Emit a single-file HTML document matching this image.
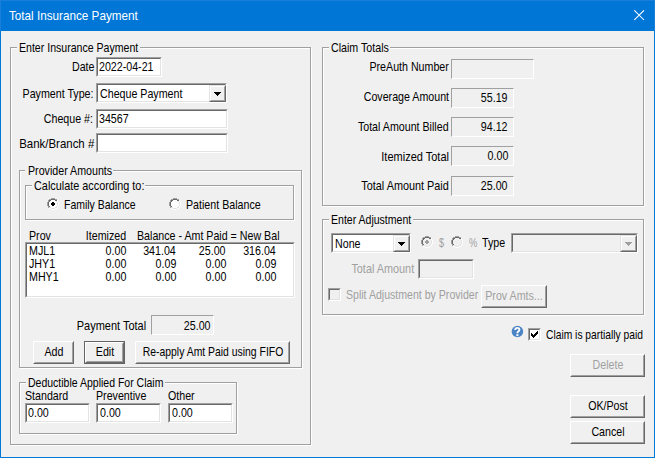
<!DOCTYPE html><html><head><meta charset="utf-8"><style>
html,body{margin:0;padding:0;width:655px;height:458px;overflow:hidden;background:#f0f0f0}
body{position:relative;font-family:"Liberation Sans", sans-serif}
.t{position:absolute;white-space:pre;font-family:"Liberation Sans", sans-serif}
</style></head><body>
<div style="position:absolute;left:0px;top:0px;width:655px;height:458px;box-sizing:border-box;background:#f0f0f0;border:1px solid #0078d7"></div>
<div style="position:absolute;left:0px;top:0px;width:655px;height:31px;box-sizing:border-box;background:#0076d7;border-top:1px solid #1a7fd8;border-left:1px solid #1a7fd8;border-right:1px solid #1a7fd8"></div>
<div class="t" style="left:9.00px;top:8.44px;color:#fff;font-size:13px;line-height:16px;transform:scaleX(0.9);transform-origin:0 0;">Total Insurance Payment</div>
<svg style="position:absolute;left:634px;top:10px" width="11" height="11"><path d="M0.3 0.3L10 10M10 0.3L0.3 10" stroke="#fff" stroke-width="1.05"/></svg>
<div style="position:absolute;left:11px;top:48px;width:301px;height:398px;box-sizing:border-box;border:1px solid #fff"></div>
<div style="position:absolute;left:10px;top:47px;width:301px;height:398px;box-sizing:border-box;border:1px solid #a0a0a0"></div>
<div style="position:absolute;left:17px;top:41px;width:123px;height:12px;box-sizing:border-box;background:#f0f0f0"></div>
<div class="t" style="left:19.00px;top:40.44px;color:#000;font-size:13px;line-height:16px;transform:scaleX(0.813);transform-origin:0 0;">Enter Insurance Payment</div>
<div class="t" style="right:561.00px;top:59.44px;color:#000;font-size:13px;line-height:16px;transform:scaleX(0.82);transform-origin:100% 0;">Date</div>
<div style="position:absolute;left:96px;top:57px;width:66px;height:20px;box-sizing:border-box;border-style:solid;border-width:1px;border-color:#a0a0a0 #fff #fff #a0a0a0;background:#fff"></div>
<div style="position:absolute;left:97px;top:58px;width:64px;height:18px;box-sizing:border-box;border-style:solid;border-width:1px;border-color:#696969 #e3e3e3 #e3e3e3 #696969"></div>
<div class="t" style="left:99.00px;top:59.44px;color:#000;font-size:13px;line-height:16px;transform:scaleX(0.82);transform-origin:0 0;">2022-04-21</div>
<div class="t" style="right:562.00px;top:86.44px;color:#000;font-size:13px;line-height:16px;transform:scaleX(0.82);transform-origin:100% 0;">Payment Type:</div>
<div style="position:absolute;left:96px;top:83px;width:131px;height:20px;box-sizing:border-box;border-style:solid;border-width:1px;border-color:#a0a0a0 #fff #fff #a0a0a0;background:#fff"></div>
<div style="position:absolute;left:97px;top:84px;width:129px;height:18px;box-sizing:border-box;border-style:solid;border-width:1px;border-color:#696969 #e3e3e3 #e3e3e3 #696969"></div>
<div style="position:absolute;left:209px;top:85px;width:17px;height:17px;box-sizing:border-box;border-style:solid;border-width:1px;border-color:#e3e3e3 #696969 #696969 #e3e3e3;background:#f0f0f0"></div>
<div style="position:absolute;left:210px;top:86px;width:15px;height:15px;box-sizing:border-box;border-style:solid;border-width:1px;border-color:#fff #a0a0a0 #a0a0a0 #fff"></div>
<svg style="position:absolute;left:214px;top:92px" width="7" height="4" shape-rendering="crispEdges"><rect x="0" y="0" width="7" height="1" fill="#000"/><rect x="1" y="1" width="5" height="1" fill="#000"/><rect x="2" y="2" width="3" height="1" fill="#000"/><rect x="3" y="3" width="1" height="1" fill="#000"/></svg>
<div class="t" style="left:100.00px;top:86.44px;color:#000;font-size:13px;line-height:16px;transform:scaleX(0.82);transform-origin:0 0;">Cheque Payment</div>
<div class="t" style="right:562.00px;top:111.44px;color:#000;font-size:13px;line-height:16px;transform:scaleX(0.82);transform-origin:100% 0;">Cheque #:</div>
<div style="position:absolute;left:96px;top:109px;width:132px;height:20px;box-sizing:border-box;border-style:solid;border-width:1px;border-color:#a0a0a0 #fff #fff #a0a0a0;background:#fff"></div>
<div style="position:absolute;left:97px;top:110px;width:130px;height:18px;box-sizing:border-box;border-style:solid;border-width:1px;border-color:#696969 #e3e3e3 #e3e3e3 #696969"></div>
<div class="t" style="left:99.00px;top:111.44px;color:#000;font-size:13px;line-height:16px;transform:scaleX(0.82);transform-origin:0 0;">34567</div>
<div class="t" style="right:561.00px;top:136.44px;color:#000;font-size:13px;line-height:16px;transform:scaleX(0.88);transform-origin:100% 0;">Bank/Branch #</div>
<div style="position:absolute;left:96px;top:133px;width:132px;height:20px;box-sizing:border-box;border-style:solid;border-width:1px;border-color:#a0a0a0 #fff #fff #a0a0a0;background:#fff"></div>
<div style="position:absolute;left:97px;top:134px;width:130px;height:18px;box-sizing:border-box;border-style:solid;border-width:1px;border-color:#696969 #e3e3e3 #e3e3e3 #696969"></div>
<div style="position:absolute;left:20px;top:171px;width:283px;height:198px;box-sizing:border-box;border:1px solid #fff"></div>
<div style="position:absolute;left:19px;top:170px;width:283px;height:198px;box-sizing:border-box;border:1px solid #a0a0a0"></div>
<div style="position:absolute;left:25px;top:164px;width:88px;height:12px;box-sizing:border-box;background:#f0f0f0"></div>
<div class="t" style="left:27.50px;top:163.44px;color:#000;font-size:13px;line-height:16px;transform:scaleX(0.82);transform-origin:0 0;">Provider Amounts</div>
<div style="position:absolute;left:26px;top:186px;width:269px;height:35px;box-sizing:border-box;border:1px solid #fff"></div>
<div style="position:absolute;left:25px;top:185px;width:269px;height:35px;box-sizing:border-box;border:1px solid #a0a0a0"></div>
<div style="position:absolute;left:32px;top:179px;width:113px;height:12px;box-sizing:border-box;background:#f0f0f0"></div>
<div class="t" style="left:34.00px;top:178.44px;color:#000;font-size:13px;line-height:16px;transform:scaleX(0.835);transform-origin:0 0;">Calculate according to:</div>
<svg style="position:absolute;left:47px;top:198px" width="12" height="12" shape-rendering="crispEdges"><rect x="4" y="0" width="4" height="1" fill="#a0a0a0"/><rect x="2" y="1" width="2" height="1" fill="#a0a0a0"/><rect x="4" y="1" width="4" height="1" fill="#696969"/><rect x="8" y="1" width="2" height="1" fill="#a0a0a0"/><rect x="1" y="2" width="1" height="1" fill="#a0a0a0"/><rect x="2" y="2" width="2" height="1" fill="#696969"/><rect x="4" y="2" width="4" height="1" fill="#fff"/><rect x="8" y="2" width="2" height="1" fill="#696969"/><rect x="10" y="2" width="1" height="1" fill="#fff"/><rect x="1" y="3" width="1" height="1" fill="#a0a0a0"/><rect x="2" y="3" width="1" height="1" fill="#696969"/><rect x="3" y="3" width="6" height="1" fill="#fff"/><rect x="9" y="3" width="1" height="1" fill="#e3e3e3"/><rect x="10" y="3" width="1" height="1" fill="#fff"/><rect x="0" y="4" width="1" height="1" fill="#a0a0a0"/><rect x="1" y="4" width="1" height="1" fill="#696969"/><rect x="2" y="4" width="8" height="1" fill="#fff"/><rect x="10" y="4" width="1" height="1" fill="#e3e3e3"/><rect x="11" y="4" width="1" height="1" fill="#fff"/><rect x="0" y="5" width="1" height="1" fill="#a0a0a0"/><rect x="1" y="5" width="1" height="1" fill="#696969"/><rect x="2" y="5" width="8" height="1" fill="#fff"/><rect x="10" y="5" width="1" height="1" fill="#e3e3e3"/><rect x="11" y="5" width="1" height="1" fill="#fff"/><rect x="0" y="6" width="1" height="1" fill="#a0a0a0"/><rect x="1" y="6" width="1" height="1" fill="#696969"/><rect x="2" y="6" width="8" height="1" fill="#fff"/><rect x="10" y="6" width="1" height="1" fill="#e3e3e3"/><rect x="11" y="6" width="1" height="1" fill="#fff"/><rect x="0" y="7" width="1" height="1" fill="#a0a0a0"/><rect x="1" y="7" width="1" height="1" fill="#696969"/><rect x="2" y="7" width="8" height="1" fill="#fff"/><rect x="10" y="7" width="1" height="1" fill="#e3e3e3"/><rect x="11" y="7" width="1" height="1" fill="#fff"/><rect x="1" y="8" width="1" height="1" fill="#a0a0a0"/><rect x="2" y="8" width="1" height="1" fill="#696969"/><rect x="3" y="8" width="6" height="1" fill="#fff"/><rect x="9" y="8" width="1" height="1" fill="#e3e3e3"/><rect x="10" y="8" width="1" height="1" fill="#fff"/><rect x="1" y="9" width="1" height="1" fill="#a0a0a0"/><rect x="2" y="9" width="2" height="1" fill="#e3e3e3"/><rect x="4" y="9" width="4" height="1" fill="#fff"/><rect x="8" y="9" width="2" height="1" fill="#e3e3e3"/><rect x="10" y="9" width="1" height="1" fill="#fff"/><rect x="2" y="10" width="2" height="1" fill="#fff"/><rect x="4" y="10" width="4" height="1" fill="#e3e3e3"/><rect x="8" y="10" width="2" height="1" fill="#fff"/><rect x="4" y="11" width="4" height="1" fill="#fff"/></svg>
<svg style="position:absolute;left:47px;top:198px" width="12" height="8" shape-rendering="crispEdges"><rect x="5" y="4" width="2" height="1" fill="#000"/><rect x="4" y="5" width="4" height="1" fill="#000"/><rect x="4" y="6" width="4" height="1" fill="#000"/><rect x="5" y="7" width="2" height="1" fill="#000"/></svg>
<div class="t" style="left:64.00px;top:197.44px;color:#000;font-size:13px;line-height:16px;transform:scaleX(0.805);transform-origin:0 0;">Family Balance</div>
<svg style="position:absolute;left:169px;top:198px" width="12" height="12" shape-rendering="crispEdges"><rect x="4" y="0" width="4" height="1" fill="#a0a0a0"/><rect x="2" y="1" width="2" height="1" fill="#a0a0a0"/><rect x="4" y="1" width="4" height="1" fill="#696969"/><rect x="8" y="1" width="2" height="1" fill="#a0a0a0"/><rect x="1" y="2" width="1" height="1" fill="#a0a0a0"/><rect x="2" y="2" width="2" height="1" fill="#696969"/><rect x="4" y="2" width="4" height="1" fill="#fff"/><rect x="8" y="2" width="2" height="1" fill="#696969"/><rect x="10" y="2" width="1" height="1" fill="#fff"/><rect x="1" y="3" width="1" height="1" fill="#a0a0a0"/><rect x="2" y="3" width="1" height="1" fill="#696969"/><rect x="3" y="3" width="6" height="1" fill="#fff"/><rect x="9" y="3" width="1" height="1" fill="#e3e3e3"/><rect x="10" y="3" width="1" height="1" fill="#fff"/><rect x="0" y="4" width="1" height="1" fill="#a0a0a0"/><rect x="1" y="4" width="1" height="1" fill="#696969"/><rect x="2" y="4" width="8" height="1" fill="#fff"/><rect x="10" y="4" width="1" height="1" fill="#e3e3e3"/><rect x="11" y="4" width="1" height="1" fill="#fff"/><rect x="0" y="5" width="1" height="1" fill="#a0a0a0"/><rect x="1" y="5" width="1" height="1" fill="#696969"/><rect x="2" y="5" width="8" height="1" fill="#fff"/><rect x="10" y="5" width="1" height="1" fill="#e3e3e3"/><rect x="11" y="5" width="1" height="1" fill="#fff"/><rect x="0" y="6" width="1" height="1" fill="#a0a0a0"/><rect x="1" y="6" width="1" height="1" fill="#696969"/><rect x="2" y="6" width="8" height="1" fill="#fff"/><rect x="10" y="6" width="1" height="1" fill="#e3e3e3"/><rect x="11" y="6" width="1" height="1" fill="#fff"/><rect x="0" y="7" width="1" height="1" fill="#a0a0a0"/><rect x="1" y="7" width="1" height="1" fill="#696969"/><rect x="2" y="7" width="8" height="1" fill="#fff"/><rect x="10" y="7" width="1" height="1" fill="#e3e3e3"/><rect x="11" y="7" width="1" height="1" fill="#fff"/><rect x="1" y="8" width="1" height="1" fill="#a0a0a0"/><rect x="2" y="8" width="1" height="1" fill="#696969"/><rect x="3" y="8" width="6" height="1" fill="#fff"/><rect x="9" y="8" width="1" height="1" fill="#e3e3e3"/><rect x="10" y="8" width="1" height="1" fill="#fff"/><rect x="1" y="9" width="1" height="1" fill="#a0a0a0"/><rect x="2" y="9" width="2" height="1" fill="#e3e3e3"/><rect x="4" y="9" width="4" height="1" fill="#fff"/><rect x="8" y="9" width="2" height="1" fill="#e3e3e3"/><rect x="10" y="9" width="1" height="1" fill="#fff"/><rect x="2" y="10" width="2" height="1" fill="#fff"/><rect x="4" y="10" width="4" height="1" fill="#e3e3e3"/><rect x="8" y="10" width="2" height="1" fill="#fff"/><rect x="4" y="11" width="4" height="1" fill="#fff"/></svg>
<div class="t" style="left:186.00px;top:197.44px;color:#000;font-size:13px;line-height:16px;transform:scaleX(0.82);transform-origin:0 0;">Patient Balance</div>
<div class="t" style="left:29.00px;top:228.44px;color:#000;font-size:13px;line-height:16px;transform:scaleX(0.82);transform-origin:0 0;">Prov</div>
<div class="t" style="right:529.00px;top:228.44px;color:#000;font-size:13px;line-height:16px;transform:scaleX(0.82);transform-origin:100% 0;">Itemized</div>
<div class="t" style="left:137.00px;top:228.44px;color:#000;font-size:13px;line-height:16px;transform:scaleX(0.82);transform-origin:0 0;">Balance - Amt Paid = New Bal</div>
<div style="position:absolute;left:25px;top:242px;width:270px;height:56px;box-sizing:border-box;border-style:solid;border-width:1px;border-color:#a0a0a0 #fff #fff #a0a0a0;background:#fff"></div>
<div style="position:absolute;left:26px;top:243px;width:268px;height:54px;box-sizing:border-box;border-style:solid;border-width:1px;border-color:#696969 #e3e3e3 #e3e3e3 #696969"></div>
<div class="t" style="left:29.00px;top:243.44px;color:#000;font-size:13px;line-height:16px;transform:scaleX(0.82);transform-origin:0 0;">MJL1</div>
<div class="t" style="right:529.00px;top:243.44px;color:#000;font-size:13px;line-height:16px;transform:scaleX(0.82);transform-origin:100% 0;">0.00</div>
<div class="t" style="right:479.00px;top:243.44px;color:#000;font-size:13px;line-height:16px;transform:scaleX(0.82);transform-origin:100% 0;">341.04</div>
<div class="t" style="right:429.00px;top:243.44px;color:#000;font-size:13px;line-height:16px;transform:scaleX(0.82);transform-origin:100% 0;">25.00</div>
<div class="t" style="right:379.00px;top:243.44px;color:#000;font-size:13px;line-height:16px;transform:scaleX(0.82);transform-origin:100% 0;">316.04</div>
<div class="t" style="left:29.00px;top:256.44px;color:#000;font-size:13px;line-height:16px;transform:scaleX(0.82);transform-origin:0 0;">JHY1</div>
<div class="t" style="right:529.00px;top:256.44px;color:#000;font-size:13px;line-height:16px;transform:scaleX(0.82);transform-origin:100% 0;">0.00</div>
<div class="t" style="right:479.00px;top:256.44px;color:#000;font-size:13px;line-height:16px;transform:scaleX(0.82);transform-origin:100% 0;">0.09</div>
<div class="t" style="right:429.00px;top:256.44px;color:#000;font-size:13px;line-height:16px;transform:scaleX(0.82);transform-origin:100% 0;">0.00</div>
<div class="t" style="right:379.00px;top:256.44px;color:#000;font-size:13px;line-height:16px;transform:scaleX(0.82);transform-origin:100% 0;">0.09</div>
<div class="t" style="left:29.00px;top:269.44px;color:#000;font-size:13px;line-height:16px;transform:scaleX(0.82);transform-origin:0 0;">MHY1</div>
<div class="t" style="right:529.00px;top:269.44px;color:#000;font-size:13px;line-height:16px;transform:scaleX(0.82);transform-origin:100% 0;">0.00</div>
<div class="t" style="right:479.00px;top:269.44px;color:#000;font-size:13px;line-height:16px;transform:scaleX(0.82);transform-origin:100% 0;">0.00</div>
<div class="t" style="right:429.00px;top:269.44px;color:#000;font-size:13px;line-height:16px;transform:scaleX(0.82);transform-origin:100% 0;">0.00</div>
<div class="t" style="right:379.00px;top:269.44px;color:#000;font-size:13px;line-height:16px;transform:scaleX(0.82);transform-origin:100% 0;">0.00</div>
<div class="t" style="right:509.00px;top:318.44px;color:#000;font-size:13px;line-height:16px;transform:scaleX(0.845);transform-origin:100% 0;">Payment Total</div>
<div style="position:absolute;left:151px;top:315px;width:63px;height:20px;box-sizing:border-box;border-style:solid;border-width:1px;border-color:#a0a0a0 #fff #fff #a0a0a0;background:#f0f0f0"></div>
<div class="t" style="right:444.00px;top:318.44px;color:#000;font-size:13px;line-height:16px;transform:scaleX(0.82);transform-origin:100% 0;">25.00</div>
<div style="position:absolute;left:33px;top:341px;width:41px;height:23px;box-sizing:border-box;border-style:solid;border-width:1px;border-color:#fff #696969 #696969 #fff;background:#f0f0f0"></div>
<div style="position:absolute;left:34px;top:342px;width:39px;height:21px;box-sizing:border-box;border-style:solid;border-width:1px;border-color:#f0f0f0 #a0a0a0 #a0a0a0 #f0f0f0"></div>
<div class="t" style="left:-146.5px;width:400px;text-align:center;top:344.44px;color:#000;font-size:13px;line-height:16px;transform:scaleX(0.82);transform-origin:50% 0;">Add</div>
<div style="position:absolute;left:84px;top:341px;width:41px;height:23px;box-sizing:border-box;border:1px solid #646464;background:#f0f0f0"></div>
<div style="position:absolute;left:85px;top:342px;width:39px;height:21px;box-sizing:border-box;border-style:solid;border-width:1px;border-color:#fff #696969 #696969 #fff;background:#f0f0f0"></div>
<div style="position:absolute;left:86px;top:343px;width:37px;height:19px;box-sizing:border-box;border-style:solid;border-width:1px;border-color:#f0f0f0 #a0a0a0 #a0a0a0 #f0f0f0"></div>
<div class="t" style="left:-95.5px;width:400px;text-align:center;top:344.44px;color:#000;font-size:13px;line-height:16px;transform:scaleX(0.82);transform-origin:50% 0;">Edit</div>
<div style="position:absolute;left:135px;top:341px;width:155px;height:23px;box-sizing:border-box;border-style:solid;border-width:1px;border-color:#fff #696969 #696969 #fff;background:#f0f0f0"></div>
<div style="position:absolute;left:136px;top:342px;width:153px;height:21px;box-sizing:border-box;border-style:solid;border-width:1px;border-color:#f0f0f0 #a0a0a0 #a0a0a0 #f0f0f0"></div>
<div class="t" style="left:12.5px;width:400px;text-align:center;top:344.44px;color:#000;font-size:13px;line-height:16px;transform:scaleX(0.8);transform-origin:50% 0;">Re-apply Amt Paid using FIFO</div>
<div style="position:absolute;left:20px;top:383px;width:218px;height:52px;box-sizing:border-box;border:1px solid #fff"></div>
<div style="position:absolute;left:19px;top:382px;width:218px;height:52px;box-sizing:border-box;border:1px solid #a0a0a0"></div>
<div style="position:absolute;left:26px;top:376px;width:139px;height:12px;box-sizing:border-box;background:#f0f0f0"></div>
<div class="t" style="left:28.00px;top:375.44px;color:#000;font-size:13px;line-height:16px;transform:scaleX(0.808);transform-origin:0 0;">Deductible Applied For Claim</div>
<div class="t" style="left:25.00px;top:388.44px;color:#000;font-size:13px;line-height:16px;transform:scaleX(0.82);transform-origin:0 0;">Standard</div>
<div class="t" style="left:96.00px;top:388.44px;color:#000;font-size:13px;line-height:16px;transform:scaleX(0.82);transform-origin:0 0;">Preventive</div>
<div class="t" style="left:168.00px;top:388.44px;color:#000;font-size:13px;line-height:16px;transform:scaleX(0.82);transform-origin:0 0;">Other</div>
<div style="position:absolute;left:25px;top:403px;width:65px;height:20px;box-sizing:border-box;border-style:solid;border-width:1px;border-color:#a0a0a0 #fff #fff #a0a0a0;background:#fff"></div>
<div style="position:absolute;left:26px;top:404px;width:63px;height:18px;box-sizing:border-box;border-style:solid;border-width:1px;border-color:#696969 #e3e3e3 #e3e3e3 #696969"></div>
<div class="t" style="left:28.00px;top:405.44px;color:#000;font-size:13px;line-height:16px;transform:scaleX(0.82);transform-origin:0 0;">0.00</div>
<div style="position:absolute;left:96px;top:403px;width:65px;height:20px;box-sizing:border-box;border-style:solid;border-width:1px;border-color:#a0a0a0 #fff #fff #a0a0a0;background:#fff"></div>
<div style="position:absolute;left:97px;top:404px;width:63px;height:18px;box-sizing:border-box;border-style:solid;border-width:1px;border-color:#696969 #e3e3e3 #e3e3e3 #696969"></div>
<div class="t" style="left:100.00px;top:405.44px;color:#000;font-size:13px;line-height:16px;transform:scaleX(0.82);transform-origin:0 0;">0.00</div>
<div style="position:absolute;left:168px;top:403px;width:65px;height:20px;box-sizing:border-box;border-style:solid;border-width:1px;border-color:#a0a0a0 #fff #fff #a0a0a0;background:#fff"></div>
<div style="position:absolute;left:169px;top:404px;width:63px;height:18px;box-sizing:border-box;border-style:solid;border-width:1px;border-color:#696969 #e3e3e3 #e3e3e3 #696969"></div>
<div class="t" style="left:171.50px;top:405.44px;color:#000;font-size:13px;line-height:16px;transform:scaleX(0.82);transform-origin:0 0;">0.00</div>
<div style="position:absolute;left:323px;top:48px;width:322px;height:159px;box-sizing:border-box;border:1px solid #fff"></div>
<div style="position:absolute;left:322px;top:47px;width:322px;height:159px;box-sizing:border-box;border:1px solid #a0a0a0"></div>
<div style="position:absolute;left:329px;top:41px;width:61px;height:12px;box-sizing:border-box;background:#f0f0f0"></div>
<div class="t" style="left:331.00px;top:40.44px;color:#000;font-size:13px;line-height:16px;transform:scaleX(0.82);transform-origin:0 0;">Claim Totals</div>
<div class="t" style="right:206.00px;top:59.44px;color:#000;font-size:13px;line-height:16px;transform:scaleX(0.82);transform-origin:100% 0;">PreAuth Number</div>
<div style="position:absolute;left:451px;top:59px;width:83px;height:20px;box-sizing:border-box;border-style:solid;border-width:1px;border-color:#a0a0a0 #fff #fff #a0a0a0;background:#f0f0f0"></div>
<div class="t" style="right:206.00px;top:89.44px;color:#000;font-size:13px;line-height:16px;transform:scaleX(0.82);transform-origin:100% 0;">Coverage Amount</div>
<div style="position:absolute;left:451px;top:88px;width:63px;height:20px;box-sizing:border-box;border-style:solid;border-width:1px;border-color:#a0a0a0 #fff #fff #a0a0a0;background:#f0f0f0"></div>
<div class="t" style="right:147.00px;top:90.44px;color:#000;font-size:13px;line-height:16px;transform:scaleX(0.82);transform-origin:100% 0;">55.19</div>
<div class="t" style="right:206.00px;top:119.44px;color:#000;font-size:13px;line-height:16px;transform:scaleX(0.82);transform-origin:100% 0;">Total Amount Billed</div>
<div style="position:absolute;left:451px;top:117px;width:63px;height:20px;box-sizing:border-box;border-style:solid;border-width:1px;border-color:#a0a0a0 #fff #fff #a0a0a0;background:#f0f0f0"></div>
<div class="t" style="right:147.00px;top:119.44px;color:#000;font-size:13px;line-height:16px;transform:scaleX(0.82);transform-origin:100% 0;">94.12</div>
<div class="t" style="right:206.00px;top:149.44px;color:#000;font-size:13px;line-height:16px;transform:scaleX(0.846);transform-origin:100% 0;">Itemized Total</div>
<div style="position:absolute;left:451px;top:146px;width:63px;height:20px;box-sizing:border-box;border-style:solid;border-width:1px;border-color:#a0a0a0 #fff #fff #a0a0a0;background:#f0f0f0"></div>
<div class="t" style="right:147.00px;top:148.44px;color:#000;font-size:13px;line-height:16px;transform:scaleX(0.82);transform-origin:100% 0;">0.00</div>
<div class="t" style="right:206.00px;top:178.44px;color:#000;font-size:13px;line-height:16px;transform:scaleX(0.835);transform-origin:100% 0;">Total Amount Paid</div>
<div style="position:absolute;left:451px;top:176px;width:63px;height:20px;box-sizing:border-box;border-style:solid;border-width:1px;border-color:#a0a0a0 #fff #fff #a0a0a0;background:#f0f0f0"></div>
<div class="t" style="right:147.00px;top:178.44px;color:#000;font-size:13px;line-height:16px;transform:scaleX(0.82);transform-origin:100% 0;">25.00</div>
<div style="position:absolute;left:323px;top:220px;width:322px;height:96px;box-sizing:border-box;border:1px solid #fff"></div>
<div style="position:absolute;left:322px;top:219px;width:322px;height:96px;box-sizing:border-box;border:1px solid #a0a0a0"></div>
<div style="position:absolute;left:329px;top:213px;width:84px;height:12px;box-sizing:border-box;background:#f0f0f0"></div>
<div class="t" style="left:331.00px;top:212.44px;color:#000;font-size:13px;line-height:16px;transform:scaleX(0.81);transform-origin:0 0;">Enter Adjustment</div>
<div style="position:absolute;left:331px;top:233px;width:80px;height:20px;box-sizing:border-box;border-style:solid;border-width:1px;border-color:#a0a0a0 #fff #fff #a0a0a0;background:#fff"></div>
<div style="position:absolute;left:332px;top:234px;width:78px;height:18px;box-sizing:border-box;border-style:solid;border-width:1px;border-color:#696969 #e3e3e3 #e3e3e3 #696969"></div>
<div style="position:absolute;left:393px;top:235px;width:17px;height:17px;box-sizing:border-box;border-style:solid;border-width:1px;border-color:#e3e3e3 #696969 #696969 #e3e3e3;background:#f0f0f0"></div>
<div style="position:absolute;left:394px;top:236px;width:15px;height:15px;box-sizing:border-box;border-style:solid;border-width:1px;border-color:#fff #a0a0a0 #a0a0a0 #fff"></div>
<svg style="position:absolute;left:398px;top:242px" width="7" height="4" shape-rendering="crispEdges"><rect x="0" y="0" width="7" height="1" fill="#000"/><rect x="1" y="1" width="5" height="1" fill="#000"/><rect x="2" y="2" width="3" height="1" fill="#000"/><rect x="3" y="3" width="1" height="1" fill="#000"/></svg>
<div class="t" style="left:335.00px;top:236.44px;color:#000;font-size:13px;line-height:16px;transform:scaleX(0.82);transform-origin:0 0;">None</div>
<svg style="position:absolute;left:421px;top:236px" width="12" height="12" shape-rendering="crispEdges"><rect x="4" y="0" width="4" height="1" fill="#a0a0a0"/><rect x="2" y="1" width="2" height="1" fill="#a0a0a0"/><rect x="4" y="1" width="4" height="1" fill="#696969"/><rect x="8" y="1" width="2" height="1" fill="#a0a0a0"/><rect x="1" y="2" width="1" height="1" fill="#a0a0a0"/><rect x="2" y="2" width="2" height="1" fill="#696969"/><rect x="4" y="2" width="4" height="1" fill="#f0f0f0"/><rect x="8" y="2" width="2" height="1" fill="#696969"/><rect x="10" y="2" width="1" height="1" fill="#fff"/><rect x="1" y="3" width="1" height="1" fill="#a0a0a0"/><rect x="2" y="3" width="1" height="1" fill="#696969"/><rect x="3" y="3" width="6" height="1" fill="#f0f0f0"/><rect x="9" y="3" width="1" height="1" fill="#e3e3e3"/><rect x="10" y="3" width="1" height="1" fill="#fff"/><rect x="0" y="4" width="1" height="1" fill="#a0a0a0"/><rect x="1" y="4" width="1" height="1" fill="#696969"/><rect x="2" y="4" width="8" height="1" fill="#f0f0f0"/><rect x="10" y="4" width="1" height="1" fill="#e3e3e3"/><rect x="11" y="4" width="1" height="1" fill="#fff"/><rect x="0" y="5" width="1" height="1" fill="#a0a0a0"/><rect x="1" y="5" width="1" height="1" fill="#696969"/><rect x="2" y="5" width="8" height="1" fill="#f0f0f0"/><rect x="10" y="5" width="1" height="1" fill="#e3e3e3"/><rect x="11" y="5" width="1" height="1" fill="#fff"/><rect x="0" y="6" width="1" height="1" fill="#a0a0a0"/><rect x="1" y="6" width="1" height="1" fill="#696969"/><rect x="2" y="6" width="8" height="1" fill="#f0f0f0"/><rect x="10" y="6" width="1" height="1" fill="#e3e3e3"/><rect x="11" y="6" width="1" height="1" fill="#fff"/><rect x="0" y="7" width="1" height="1" fill="#a0a0a0"/><rect x="1" y="7" width="1" height="1" fill="#696969"/><rect x="2" y="7" width="8" height="1" fill="#f0f0f0"/><rect x="10" y="7" width="1" height="1" fill="#e3e3e3"/><rect x="11" y="7" width="1" height="1" fill="#fff"/><rect x="1" y="8" width="1" height="1" fill="#a0a0a0"/><rect x="2" y="8" width="1" height="1" fill="#696969"/><rect x="3" y="8" width="6" height="1" fill="#f0f0f0"/><rect x="9" y="8" width="1" height="1" fill="#e3e3e3"/><rect x="10" y="8" width="1" height="1" fill="#fff"/><rect x="1" y="9" width="1" height="1" fill="#a0a0a0"/><rect x="2" y="9" width="2" height="1" fill="#e3e3e3"/><rect x="4" y="9" width="4" height="1" fill="#f0f0f0"/><rect x="8" y="9" width="2" height="1" fill="#e3e3e3"/><rect x="10" y="9" width="1" height="1" fill="#fff"/><rect x="2" y="10" width="2" height="1" fill="#fff"/><rect x="4" y="10" width="4" height="1" fill="#e3e3e3"/><rect x="8" y="10" width="2" height="1" fill="#fff"/><rect x="4" y="11" width="4" height="1" fill="#fff"/></svg>
<svg style="position:absolute;left:421px;top:236px" width="12" height="8" shape-rendering="crispEdges"><rect x="5" y="4" width="2" height="1" fill="#a0a0a0"/><rect x="4" y="5" width="4" height="1" fill="#a0a0a0"/><rect x="4" y="6" width="4" height="1" fill="#a0a0a0"/><rect x="5" y="7" width="2" height="1" fill="#a0a0a0"/></svg>
<div class="t" style="left:439.00px;top:235.44px;color:#a0a0a0;font-size:13px;line-height:16px;transform:scaleX(0.7);transform-origin:0 0;">$</div>
<svg style="position:absolute;left:451px;top:236px" width="12" height="12" shape-rendering="crispEdges"><rect x="4" y="0" width="4" height="1" fill="#a0a0a0"/><rect x="2" y="1" width="2" height="1" fill="#a0a0a0"/><rect x="4" y="1" width="4" height="1" fill="#696969"/><rect x="8" y="1" width="2" height="1" fill="#a0a0a0"/><rect x="1" y="2" width="1" height="1" fill="#a0a0a0"/><rect x="2" y="2" width="2" height="1" fill="#696969"/><rect x="4" y="2" width="4" height="1" fill="#f0f0f0"/><rect x="8" y="2" width="2" height="1" fill="#696969"/><rect x="10" y="2" width="1" height="1" fill="#fff"/><rect x="1" y="3" width="1" height="1" fill="#a0a0a0"/><rect x="2" y="3" width="1" height="1" fill="#696969"/><rect x="3" y="3" width="6" height="1" fill="#f0f0f0"/><rect x="9" y="3" width="1" height="1" fill="#e3e3e3"/><rect x="10" y="3" width="1" height="1" fill="#fff"/><rect x="0" y="4" width="1" height="1" fill="#a0a0a0"/><rect x="1" y="4" width="1" height="1" fill="#696969"/><rect x="2" y="4" width="8" height="1" fill="#f0f0f0"/><rect x="10" y="4" width="1" height="1" fill="#e3e3e3"/><rect x="11" y="4" width="1" height="1" fill="#fff"/><rect x="0" y="5" width="1" height="1" fill="#a0a0a0"/><rect x="1" y="5" width="1" height="1" fill="#696969"/><rect x="2" y="5" width="8" height="1" fill="#f0f0f0"/><rect x="10" y="5" width="1" height="1" fill="#e3e3e3"/><rect x="11" y="5" width="1" height="1" fill="#fff"/><rect x="0" y="6" width="1" height="1" fill="#a0a0a0"/><rect x="1" y="6" width="1" height="1" fill="#696969"/><rect x="2" y="6" width="8" height="1" fill="#f0f0f0"/><rect x="10" y="6" width="1" height="1" fill="#e3e3e3"/><rect x="11" y="6" width="1" height="1" fill="#fff"/><rect x="0" y="7" width="1" height="1" fill="#a0a0a0"/><rect x="1" y="7" width="1" height="1" fill="#696969"/><rect x="2" y="7" width="8" height="1" fill="#f0f0f0"/><rect x="10" y="7" width="1" height="1" fill="#e3e3e3"/><rect x="11" y="7" width="1" height="1" fill="#fff"/><rect x="1" y="8" width="1" height="1" fill="#a0a0a0"/><rect x="2" y="8" width="1" height="1" fill="#696969"/><rect x="3" y="8" width="6" height="1" fill="#f0f0f0"/><rect x="9" y="8" width="1" height="1" fill="#e3e3e3"/><rect x="10" y="8" width="1" height="1" fill="#fff"/><rect x="1" y="9" width="1" height="1" fill="#a0a0a0"/><rect x="2" y="9" width="2" height="1" fill="#e3e3e3"/><rect x="4" y="9" width="4" height="1" fill="#f0f0f0"/><rect x="8" y="9" width="2" height="1" fill="#e3e3e3"/><rect x="10" y="9" width="1" height="1" fill="#fff"/><rect x="2" y="10" width="2" height="1" fill="#fff"/><rect x="4" y="10" width="4" height="1" fill="#e3e3e3"/><rect x="8" y="10" width="2" height="1" fill="#fff"/><rect x="4" y="11" width="4" height="1" fill="#fff"/></svg>
<div class="t" style="left:468.50px;top:235.10px;color:#a0a0a0;font-size:12px;line-height:16px;transform:scaleX(0.78);transform-origin:0 0;">%</div>
<div class="t" style="left:482.00px;top:235.44px;color:#000;font-size:13px;line-height:16px;transform:scaleX(0.82);transform-origin:0 0;">Type</div>
<div style="position:absolute;left:511px;top:233px;width:127px;height:20px;box-sizing:border-box;border-style:solid;border-width:1px;border-color:#a0a0a0 #fff #fff #a0a0a0;background:#f0f0f0"></div>
<div style="position:absolute;left:512px;top:234px;width:125px;height:18px;box-sizing:border-box;border-style:solid;border-width:1px;border-color:#696969 #e3e3e3 #e3e3e3 #696969"></div>
<div style="position:absolute;left:620px;top:235px;width:17px;height:17px;box-sizing:border-box;border-style:solid;border-width:1px;border-color:#e3e3e3 #696969 #696969 #e3e3e3;background:#f0f0f0"></div>
<div style="position:absolute;left:621px;top:236px;width:15px;height:15px;box-sizing:border-box;border-style:solid;border-width:1px;border-color:#fff #a0a0a0 #a0a0a0 #fff"></div>
<svg style="position:absolute;left:625px;top:242px" width="7" height="4" shape-rendering="crispEdges"><rect x="0" y="0" width="7" height="1" fill="#a0a0a0"/><rect x="1" y="1" width="5" height="1" fill="#a0a0a0"/><rect x="2" y="2" width="3" height="1" fill="#a0a0a0"/><rect x="3" y="3" width="1" height="1" fill="#a0a0a0"/></svg>
<div class="t" style="right:241.00px;top:261.44px;color:#a0a0a0;font-size:13px;line-height:16px;transform:scaleX(0.835);transform-origin:100% 0;">Total Amount</div>
<div style="position:absolute;left:418px;top:259px;width:56px;height:20px;box-sizing:border-box;border-style:solid;border-width:1px;border-color:#a0a0a0 #fff #fff #a0a0a0;background:#f0f0f0"></div>
<div style="position:absolute;left:419px;top:260px;width:54px;height:18px;box-sizing:border-box;border-style:solid;border-width:1px;border-color:#696969 #e3e3e3 #e3e3e3 #696969"></div>
<div style="position:absolute;left:328px;top:288px;width:13px;height:13px;box-sizing:border-box;border-style:solid;border-width:1px;border-color:#a0a0a0 #fff #fff #a0a0a0;background:#f0f0f0"></div>
<div style="position:absolute;left:329px;top:289px;width:11px;height:11px;box-sizing:border-box;border-style:solid;border-width:1px;border-color:#696969 #e3e3e3 #e3e3e3 #696969"></div>
<div class="t" style="left:346.00px;top:287.44px;color:#a0a0a0;font-size:13px;line-height:16px;transform:scaleX(0.813);transform-origin:0 0;">Split Adjustment by Provider</div>
<div style="position:absolute;left:481px;top:285px;width:66px;height:23px;box-sizing:border-box;border-style:solid;border-width:1px;border-color:#fff #696969 #696969 #fff;background:#f0f0f0"></div>
<div style="position:absolute;left:482px;top:286px;width:64px;height:21px;box-sizing:border-box;border-style:solid;border-width:1px;border-color:#f0f0f0 #a0a0a0 #a0a0a0 #f0f0f0"></div>
<div class="t" style="left:314.0px;width:400px;text-align:center;top:288.44px;color:#a0a0a0;font-size:13px;line-height:16px;transform:scaleX(0.82);transform-origin:50% 0;">Prov Amts...</div>
<svg style="position:absolute;left:511px;top:325px" width="13" height="13" viewBox="0 0 13 13"><circle cx="6.4" cy="6.5" r="5.75" fill="#4a84c4"/><path d="M4.2 5Q4.3 2.9 6.3 2.9Q8.4 2.9 8.4 4.8Q8.4 6 7 6.8Q6.4 7.2 6.4 8.2" stroke="#fff" stroke-width="1.9" fill="none"/><rect x="5.4" y="9.2" width="2" height="1.9" fill="#fff"/></svg>
<div style="position:absolute;left:528px;top:328px;width:13px;height:13px;box-sizing:border-box;border-style:solid;border-width:1px;border-color:#a0a0a0 #fff #fff #a0a0a0;background:#fff"></div>
<div style="position:absolute;left:529px;top:329px;width:11px;height:11px;box-sizing:border-box;border-style:solid;border-width:1px;border-color:#696969 #e3e3e3 #e3e3e3 #696969"></div>
<svg style="position:absolute;left:531px;top:331px" width="7" height="7" shape-rendering="crispEdges"><rect x="6" y="0" width="1" height="1" fill="#000"/><rect x="5" y="1" width="2" height="1" fill="#000"/><rect x="0" y="2" width="1" height="1" fill="#000"/><rect x="4" y="2" width="3" height="1" fill="#000"/><rect x="0" y="3" width="2" height="1" fill="#000"/><rect x="3" y="3" width="3" height="1" fill="#000"/><rect x="0" y="4" width="5" height="1" fill="#000"/><rect x="1" y="5" width="3" height="1" fill="#000"/><rect x="2" y="6" width="1" height="1" fill="#000"/></svg>
<div class="t" style="left:546.00px;top:327.44px;color:#000;font-size:13px;line-height:16px;transform:scaleX(0.79);transform-origin:0 0;">Claim is partially paid</div>
<div style="position:absolute;left:570px;top:354px;width:75px;height:23px;box-sizing:border-box;border-style:solid;border-width:1px;border-color:#fff #696969 #696969 #fff;background:#f0f0f0"></div>
<div style="position:absolute;left:571px;top:355px;width:73px;height:21px;box-sizing:border-box;border-style:solid;border-width:1px;border-color:#f0f0f0 #a0a0a0 #a0a0a0 #f0f0f0"></div>
<div class="t" style="left:407.5px;width:400px;text-align:center;top:357.44px;color:#a0a0a0;font-size:13px;line-height:16px;transform:scaleX(0.82);transform-origin:50% 0;">Delete</div>
<div style="position:absolute;left:570px;top:395px;width:75px;height:23px;box-sizing:border-box;border-style:solid;border-width:1px;border-color:#fff #696969 #696969 #fff;background:#f0f0f0"></div>
<div style="position:absolute;left:571px;top:396px;width:73px;height:21px;box-sizing:border-box;border-style:solid;border-width:1px;border-color:#f0f0f0 #a0a0a0 #a0a0a0 #f0f0f0"></div>
<div class="t" style="left:407.5px;width:400px;text-align:center;top:398.44px;color:#000;font-size:13px;line-height:16px;transform:scaleX(0.82);transform-origin:50% 0;">OK/Post</div>
<div style="position:absolute;left:570px;top:421px;width:75px;height:23px;box-sizing:border-box;border-style:solid;border-width:1px;border-color:#fff #696969 #696969 #fff;background:#f0f0f0"></div>
<div style="position:absolute;left:571px;top:422px;width:73px;height:21px;box-sizing:border-box;border-style:solid;border-width:1px;border-color:#f0f0f0 #a0a0a0 #a0a0a0 #f0f0f0"></div>
<div class="t" style="left:407.5px;width:400px;text-align:center;top:424.44px;color:#000;font-size:13px;line-height:16px;transform:scaleX(0.82);transform-origin:50% 0;">Cancel</div>
</body></html>
